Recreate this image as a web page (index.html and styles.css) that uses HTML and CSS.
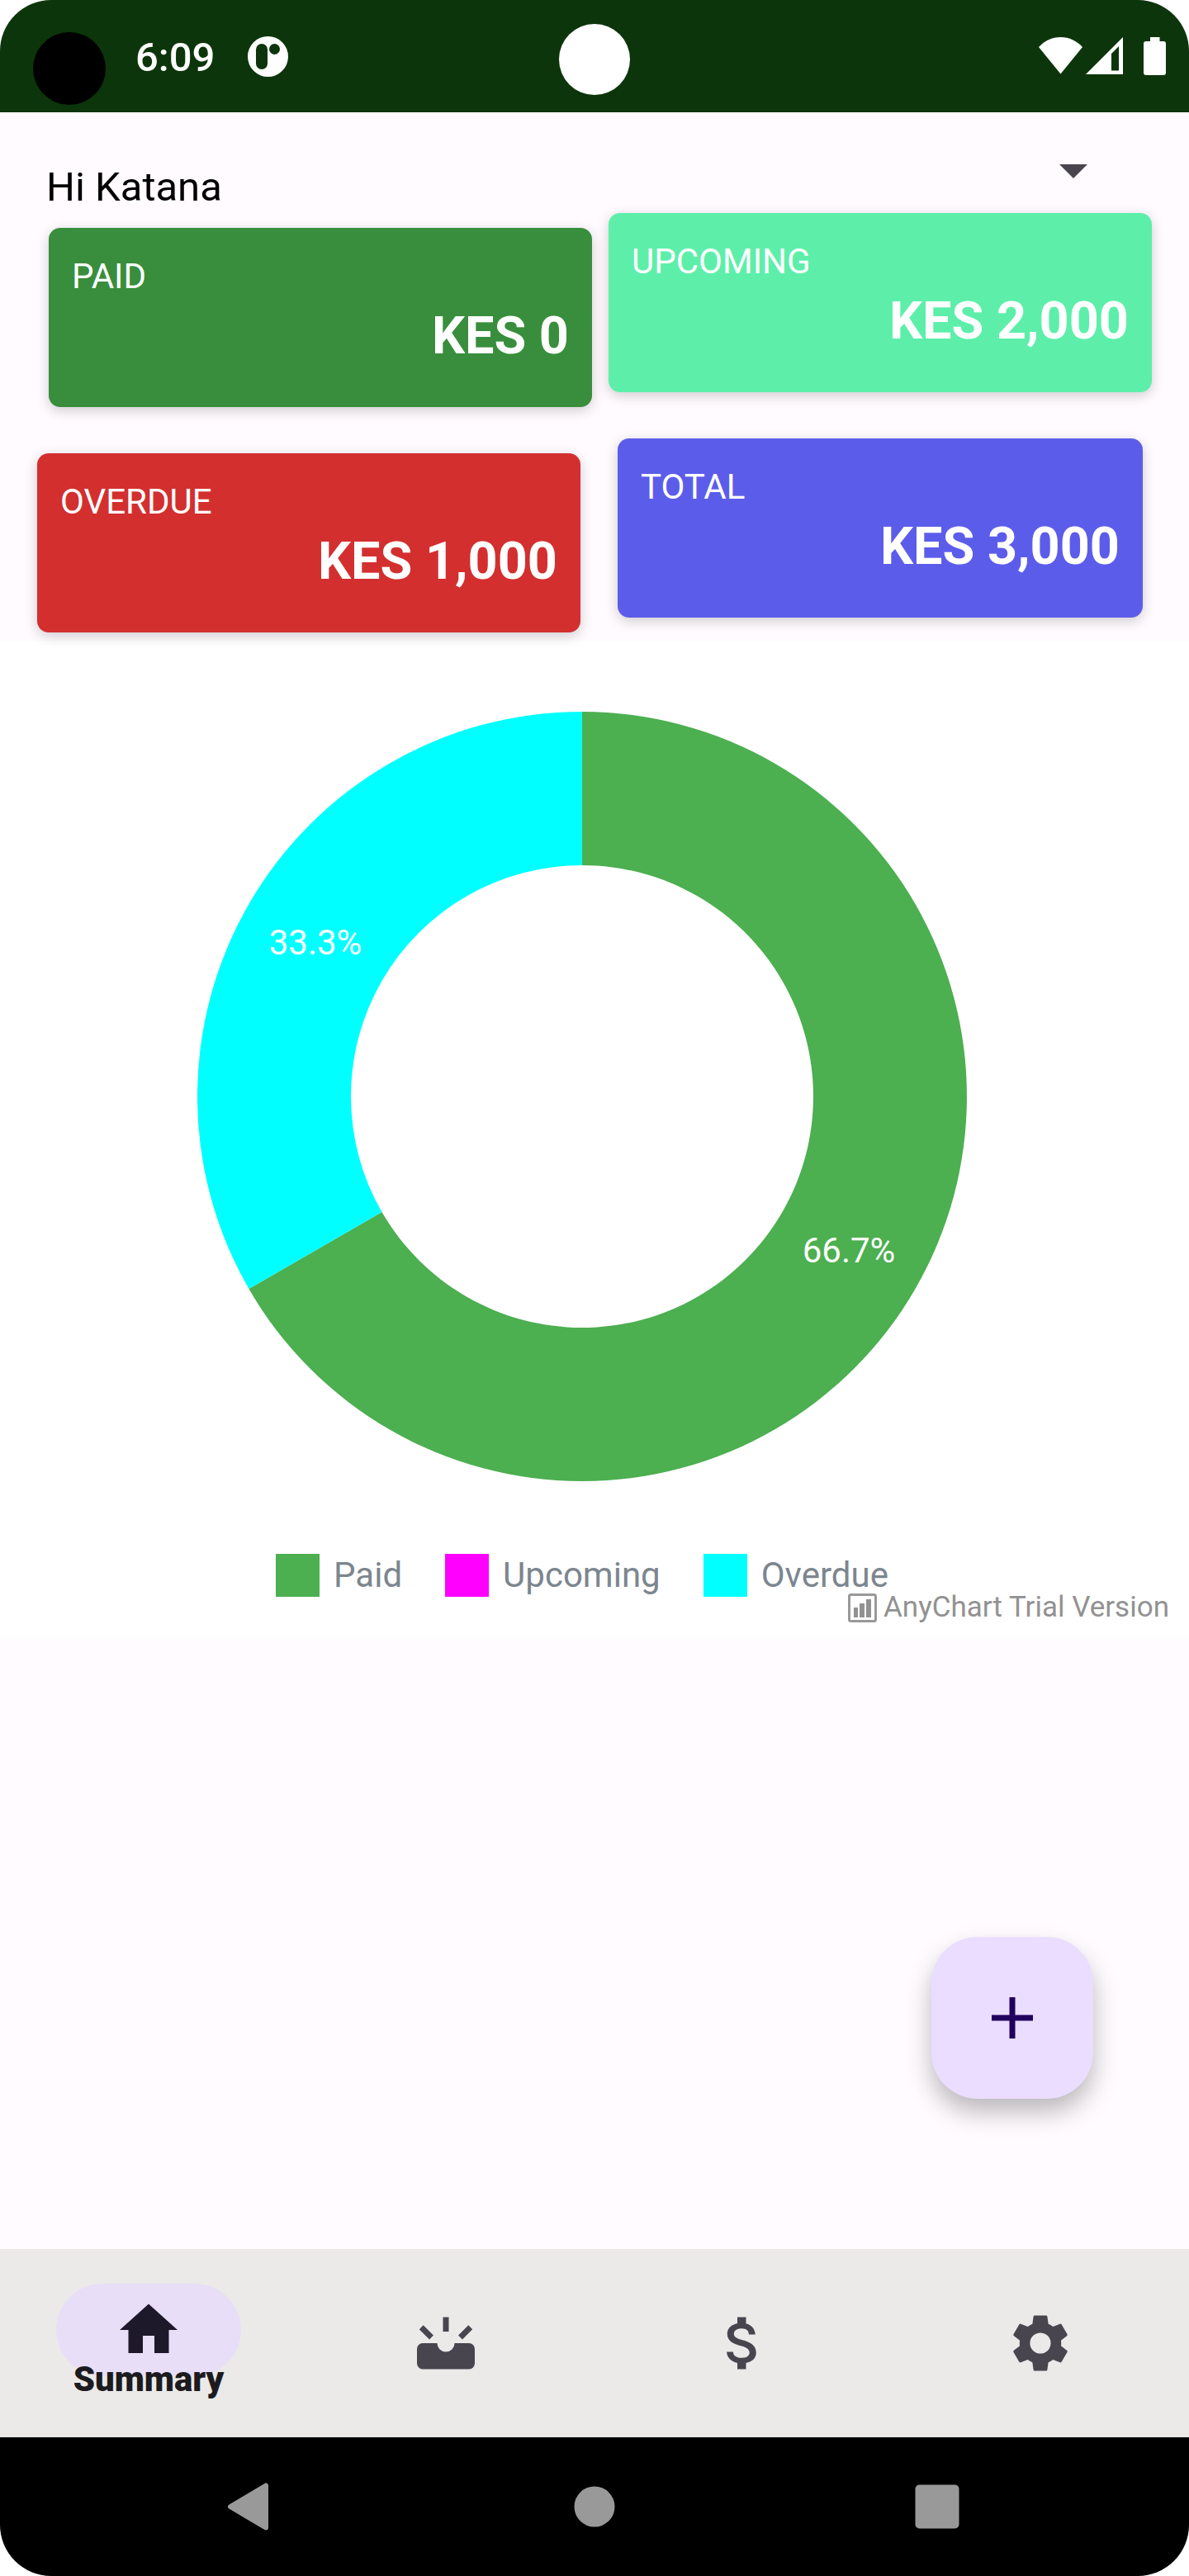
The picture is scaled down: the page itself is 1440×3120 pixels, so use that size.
FILE: index.html
```html
<!DOCTYPE html>
<html lang="en">
<head>
  <meta charset="utf-8">
  <meta name="viewport" content="width=device-width, initial-scale=1">
  <title>Summary</title>
  <link rel="stylesheet" href="styles.css">
</head>
<body>
  <div class="device">
    <header class="status-bar">
      <span class="corner-lens"></span>
      <span class="camera"></span>
      <div class="status-left">
        <time class="clock">6:09</time>
        <svg class="app-icon" viewBox="0 0 49 49" aria-hidden="true">
          <circle cx="24.5" cy="24.5" r="24.5" fill="#fff"/>
          <rect x="10" y="9" width="14" height="31" rx="7" fill="#0d350b"/>
          <circle cx="32.5" cy="15.5" r="6.5" fill="#0d350b"/>
        </svg>
      </div>
      <svg class="status-icons" viewBox="0 0 154 46" aria-hidden="true">
        <path fill="#fff" d="M0 12C7 4.500 16 0 26.500 0S46 4.500 53 12L26.500 44.500z"/>
        <path fill="#fff" fill-rule="evenodd" d="M57 45 102 0V45zM88 20V40.500H97V11z"/>
        <path fill="#fff" d="M135 0h11.500v5H151a3 3 0 0 1 3 3v35a3 3 0 0 1-3 3H130a3 3 0 0 1-3-3V8a3 3 0 0 1 3-3h5z"/>
      </svg>
    </header>

    <main class="content">
      <section class="summary">
        <div class="column column-left">
          <h1 class="greeting">Hi Katana</h1>
          <article class="card card-paid">
            <h2 class="card-label">PAID</h2>
            <p class="card-amount">KES 0</p>
          </article>
          <article class="card card-overdue">
            <h2 class="card-label">OVERDUE</h2>
            <p class="card-amount">KES 1,000</p>
          </article>
        </div>
        <div class="column">
          <div class="picker">
            <select class="picker-select" aria-label="Period"><option></option></select>
            <svg class="picker-arrow" viewBox="0 0 34 17" aria-hidden="true"><path fill="#49454f" d="M0 0h34L17 17z"/></svg>
          </div>
          <article class="card card-upcoming">
            <h2 class="card-label">UPCOMING</h2>
            <p class="card-amount">KES 2,000</p>
          </article>
          <article class="card card-total">
            <h2 class="card-label">TOTAL</h2>
            <p class="card-amount">KES 3,000</p>
          </article>
        </div>
      </section>

      <section class="chart">
        <svg class="donut" viewBox="-466 -466 932 932" role="img" aria-label="Paid 66.7%, Overdue 33.3%">
          <path fill="#4caf50" d="M0-466A466 466 0 1 1-403.600 233L-242.500 140A280 280 0 1 0 0-280z"/>
          <path fill="#00ffff" d="M0-466A466 466 0 0 0-403.600 233L-242.500 140A280 280 0 0 1 0-280z"/>
          <text class="donut-label" x="323" y="201">66.7%</text>
          <text class="donut-label" x="-323" y="-172">33.3%</text>
        </svg>
        <ul class="legend">
          <li class="legend-item"><span class="swatch swatch-paid"></span>Paid</li>
          <li class="legend-item"><span class="swatch swatch-upcoming"></span>Upcoming</li>
          <li class="legend-item"><span class="swatch swatch-overdue"></span>Overdue</li>
        </ul>
        <p class="credit">
          <svg class="credit-icon" viewBox="0 0 35 35" aria-hidden="true">
            <rect x="1.500" y="1.500" width="32" height="32" rx="2" fill="none" stroke="#999" stroke-width="3"/>
            <path fill="#929292" d="M7 17h5v12H7zM14 12h6v17h-6zM22 7h6v22h-6z"/>
          </svg>
          AnyChart Trial Version
        </p>
      </section>

      <button class="fab" type="button" aria-label="Add">
        <svg class="fab-icon" viewBox="0 0 50 50" aria-hidden="true"><path fill="#21005d" d="M21.500 0h7v21.500H50v7H28.500V50h-7V28.500H0v-7h21.500z"/></svg>
      </button>
    </main>

    <nav class="tabs" aria-label="Main">
      <a class="tab tab-active" href="#summary" aria-current="page">
        <span class="pill">
          <svg class="tab-icon" viewBox="0 0 24 24" aria-hidden="true"><path d="M10 20v-6h4v6h5v-8h3L12 3 2 12h3v8z"/></svg>
        </span>
        <span class="tab-label">Summary</span>
      </a>
      <a class="tab" href="#inbox" aria-label="Inbox">
        <svg class="tab-icon" viewBox="0 0 24 24" aria-hidden="true"><path d="M20 12h-5a3 3 0 0 1-6 0H4a2 2 0 0 0-2 2v5a2 2 0 0 0 2 2h16a2 2 0 0 0 2-2v-5a2 2 0 0 0-2-2zM11 3h2v5h-2zM2.800 7.200 4.200 5.800 7.700 9.300 6.300 10.700zM21.200 7.200 19.800 5.800 16.300 9.300 17.700 10.700z"/></svg>
      </a>
      <a class="tab" href="#payments" aria-label="Payments">
        <svg class="tab-icon" viewBox="0 0 24 24" aria-hidden="true"><path d="M11.800 10.900c-2.270-.59-3-1.200-3-2.150 0-1.090 1.010-1.850 2.700-1.850 1.780 0 2.440.85 2.500 2.100h2.210c-.07-1.720-1.120-3.300-3.210-3.810V3h-3v2.160c-1.940.42-3.500 1.680-3.500 3.610 0 2.310 1.910 3.460 4.700 4.130 2.500.6 3 1.480 3 2.410 0 .69-.49 1.790-2.700 1.790-2.060 0-2.870-.92-2.980-2.100h-2.200c.12 2.190 1.760 3.420 3.680 3.830V21h3v-2.150c1.950-.37 3.500-1.500 3.500-3.550 0-2.840-2.430-3.810-4.700-4.400z"/></svg>
      </a>
      <a class="tab" href="#settings" aria-label="Settings">
        <svg class="tab-icon" viewBox="0 0 24 24" aria-hidden="true"><path fill-rule="evenodd" d="M19.140 12.940c.04-.3.06-.61.06-.94 0-.32-.02-.64-.07-.94l2.030-1.580c.18-.14.23-.41.12-.61l-1.920-3.320c-.12-.22-.37-.29-.59-.22l-2.390.96c-.5-.38-1.030-.7-1.620-.94L14.400 2.810c-.04-.24-.24-.41-.48-.41h-3.840c-.24 0-.43.17-.47.41L9.250 5.350C8.660 5.590 8.120 5.920 7.630 6.290L5.240 5.330c-.22-.08-.47 0-.59.22L2.740 8.870c-.12.21-.08.47.12.61l2.030 1.580c-.05.3-.09.63-.09.94s.02.64.07.94l-2.030 1.580c-.18.14-.23.41-.12.61l1.920 3.320c.12.22.37.29.59.22l2.390-.96c.5.38 1.030.7 1.620.94l.36 2.540c.05.24.24.41.48.41h3.840c.24 0 .44-.17.47-.41l.36-2.540c.59-.24 1.130-.56 1.620-.94l2.390.96c.22.08.47 0 .59-.22l1.920-3.320c.12-.22.07-.47-.12-.61zM12 15.600a3.600 3.600 0 1 1 0-7.200 3.600 3.600 0 0 1 0 7.200z"/></svg>
      </a>
    </nav>

    <div class="system-nav">
      <button class="system-button" type="button" aria-label="Back">
        <svg class="system-icon" viewBox="0 0 60 60" aria-hidden="true"><path fill="#999" stroke="#999" stroke-width="6" stroke-linejoin="round" d="M47 4.500v51L4 30z"/></svg>
      </button>
      <button class="system-button" type="button" aria-label="Home">
        <svg class="system-icon" viewBox="0 0 60 60" aria-hidden="true"><circle cx="30" cy="30" r="24.500" fill="#999"/></svg>
      </button>
      <button class="system-button" type="button" aria-label="Recent apps">
        <svg class="system-icon" viewBox="0 0 60 60" aria-hidden="true"><rect x="3.500" y="3.500" width="53" height="53" rx="5" fill="#999"/></svg>
      </button>
    </div>
  </div>
</body>
</html>
```
FILE: styles.css
```css
* {
  box-sizing: border-box;
  margin: 0;
  padding: 0;
}

body {
  background: #fff;
  font-family: Roboto, sans-serif;
}

button {
  border: 0;
  background: none;
}

.device {
  display: flex;
  flex-direction: column;
  min-height: 100vh;
  overflow: hidden;
  border-radius: 62px;
  background: #fffbff;
}

/* Status bar */
.status-bar {
  position: relative;
  display: flex;
  justify-content: space-between;
  height: 136px;
  padding: 0 28px 0 164px;
  background: #0d350b;
}

.corner-lens,
.camera {
  position: absolute;
  border-radius: 50%;
}

.corner-lens {
  top: 39px;
  left: 40px;
  width: 88px;
  height: 88px;
  background: #000;
}

.camera {
  top: 29px;
  left: calc(50% - 43px);
  width: 86px;
  height: 86px;
  background: #fff;
}

.status-left {
  display: flex;
  gap: 40px;
}

.clock {
  padding-top: 40px;
  color: #fff;
  font-size: 49px;
  font-weight: 500;
  line-height: 60px;
}

.app-icon {
  width: 49px;
  height: 49px;
  margin-top: 44px;
}

.status-icons {
  width: 154px;
  height: 46px;
  margin-top: 45px;
}

/* Summary cards */
.content {
  display: flex;
  flex: 1;
  flex-direction: column;
}

.summary {
  z-index: 1;
  display: grid;
  grid-template-columns: 672fr 658fr;
  column-gap: 20px;
  padding: 0 45px;
}

.column {
  display: flex;
  flex-direction: column;
}

.column-left {
  padding-bottom: 10px;
}

.greeting {
  height: 140px;
  padding: 61px 0 0 11px;
  color: #000;
  font-size: 49px;
  font-weight: 400;
  line-height: 60px;
}

.picker {
  display: flex;
  position: relative;
  justify-content: flex-end;
  height: 122px;
}

.picker-select {
  width: 100%;
  border: 0;
  background: transparent;
  appearance: none;
}

.picker-arrow {
  position: absolute;
  top: 63px;
  right: 78px;
  width: 34px;
  height: 17px;
  pointer-events: none;
}

.card {
  height: 217px;
  padding: 33px 28px;
  border-radius: 14px;
  box-shadow: 0 4px 16px rgba(0, 0, 0, 0.2);
  color: #fff;
}

.card + .card {
  margin-top: 56px;
}

.card-paid {
  margin-left: 14px;
  background: #388e3c;
}

.card-overdue {
  margin-right: 14px;
  background: #d32f2f;
}

.card-upcoming {
  background: #5defaa;
}

.card-total {
  margin-inline: 11px;
  background: #5c5ceb;
}

.card-label {
  font-size: 42px;
  font-weight: 400;
  line-height: 52px;
}

.card-amount {
  font-size: 63px;
  font-weight: 700;
  line-height: 92px;
  text-align: right;
}

/* Chart */
.chart {
  position: relative;
  display: flex;
  flex-direction: column;
  align-items: center;
  gap: 88px;
  padding: 86px 30px 50px 0;
  background: #fff;
}

.donut {
  width: 100%;
  max-width: 932px;
}

.donut-label {
  fill: #fff;
  font-size: 42px;
  text-anchor: middle;
}

.legend {
  display: flex;
  gap: 52px;
  list-style: none;
}

.legend-item {
  display: flex;
  gap: 17px;
  color: #7c868e;
  font-size: 42px;
  line-height: 52px;
}

.swatch {
  width: 53px;
  height: 52px;
}

.swatch-paid {
  background: #4caf50;
}

.swatch-upcoming {
  background: #f0f;
}

.swatch-overdue {
  background: #0ff;
}

.credit {
  position: absolute;
  right: 24px;
  bottom: 17px;
  display: flex;
  align-items: center;
  gap: 8px;
  color: #929292;
  font-size: 35px;
  line-height: 40px;
}

.credit-icon {
  width: 35px;
  height: 35px;
}

/* Add button */
.fab {
  display: flex;
  align-items: center;
  justify-content: center;
  width: 196px;
  height: 196px;
  margin: auto 116px 182px auto;
  border-radius: 56px;
  background: #eaddff;
  box-shadow: 0 16px 30px rgba(0, 0, 0, 0.27);
}

.fab-icon {
  width: 50px;
  height: 50px;
}

/* Bottom tabs */
.tabs {
  display: grid;
  grid-template-columns: repeat(4, 1fr);
  height: 228px;
  background: #ebeae8;
}

.tab {
  display: flex;
  flex-direction: column;
  align-items: center;
  justify-content: center;
  color: #49454f;
  text-decoration: none;
}

.tab-active {
  justify-content: flex-start;
  padding-top: 42px;
  color: #1d192b;
}

.pill {
  display: flex;
  align-items: center;
  justify-content: center;
  width: 224px;
  height: 112px;
  border-radius: 56px;
  background: #e8def8;
}

.tab-icon {
  width: 84px;
  height: 84px;
  fill: currentColor;
}

.tab-label {
  margin-top: -20px;
  color: #1c1b1f;
  font-size: 42px;
  font-weight: 900;
  line-height: 48px;
}

/* System navigation */
.system-nav {
  display: flex;
  align-items: center;
  justify-content: space-between;
  height: 168px;
  padding: 0 245px;
  background: #000;
}

.system-button {
  display: flex;
  align-items: center;
  justify-content: center;
  width: 120px;
  height: 120px;
}

.system-icon {
  width: 60px;
  height: 60px;
}
```
